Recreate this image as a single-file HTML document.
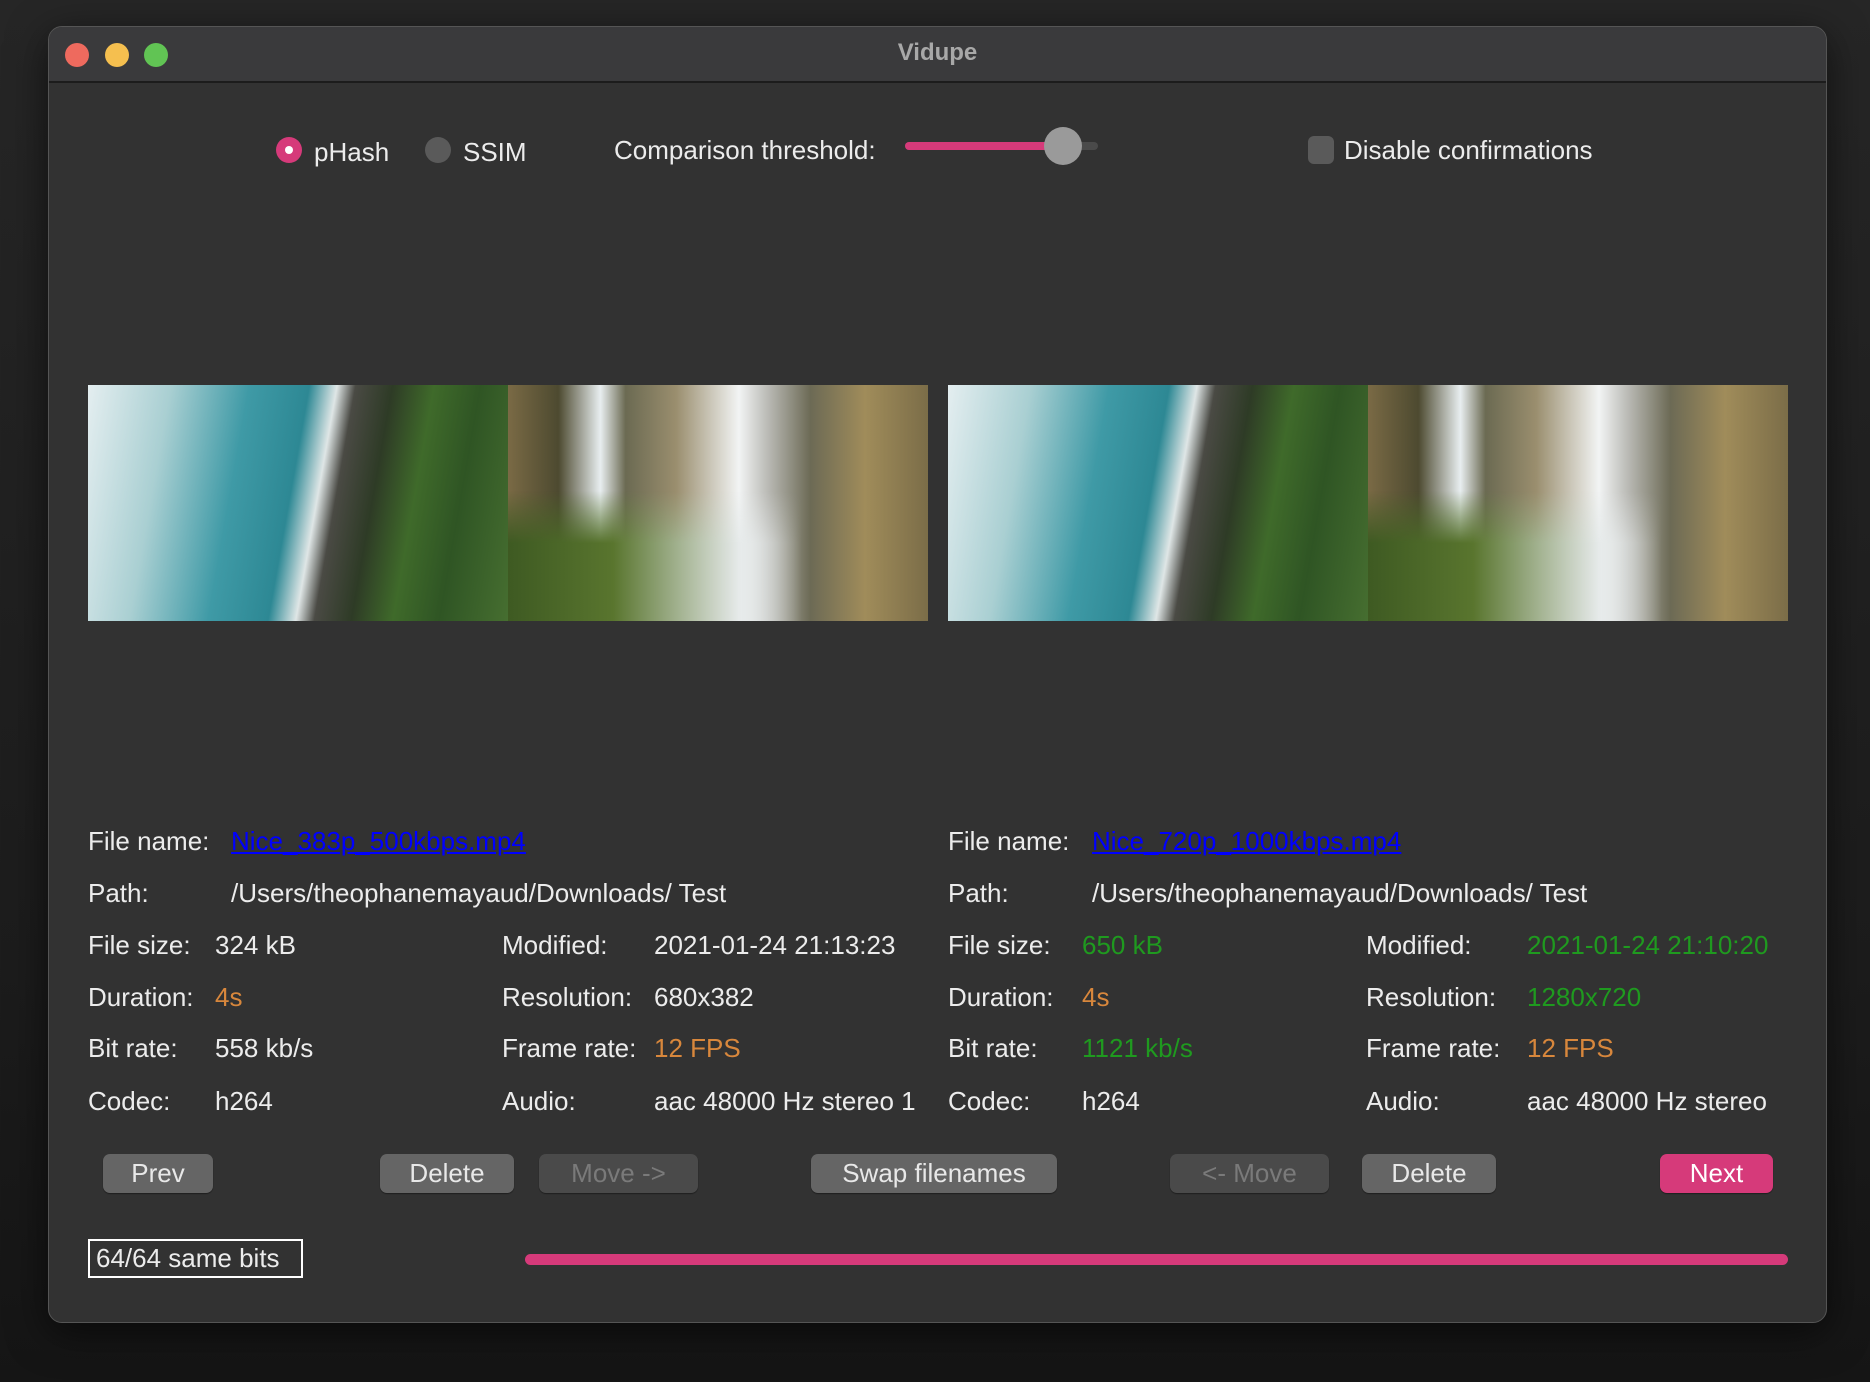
<!DOCTYPE html>
<html><head><meta charset="utf-8"><style>
*{margin:0;padding:0;box-sizing:border-box}
body{width:1870px;height:1382px;background:linear-gradient(#262626,#1c1c1c 70%,#151515);position:relative;overflow:hidden;font-family:"Liberation Sans",sans-serif;color:#ececec}
.win{position:absolute;left:48px;top:26px;width:1779px;height:1297px;background:#323232;border-radius:14px;border:1px solid #555;overflow:hidden;box-shadow:0 10px 40px rgba(0,0,0,.6)}
.tb{position:absolute;left:0;top:0;right:0;height:56px;background:#3a3a3c;border-bottom:2px solid #1c1c1c}
.tl{position:absolute;top:16px;width:24px;height:24px;border-radius:50%}
.title{position:absolute;left:0;right:0;top:12px;text-align:center;font-size:24px;font-weight:bold;color:#a8a8a8}
.a{position:absolute;white-space:nowrap;font-size:26px;line-height:30px}
.img{position:absolute;top:385px;height:236px;width:420px;overflow:hidden}
.coast{background:linear-gradient(100deg,#e4eef0 0%,#a9cfd2 18%,#3f9aa6 35%,#2d8894 48%,#dfe6e6 54%,#4a4a44 58%,#2e3b26 66%,#3f6a2a 75%,#2f5524 85%,#466e30 100%)}
.fall{background:linear-gradient(90deg,#7a6a45 0%,#4d4a30 12%,#e8eef0 22%,#6b6a52 28%,#9a8e6e 40%,#f2f4f4 55%,#b9b9b4 62%,#6c6a55 72%,#a08c5a 85%,#7b6d48 100%)}
.fall::after{content:"";position:absolute;left:0;right:0;bottom:0;height:55%;background:linear-gradient(90deg,#3e5a22,#59752e 25%,#e6eaea 55%,rgba(0,0,0,0) 70%);-webkit-mask:linear-gradient(transparent,#000 40%);mask:linear-gradient(transparent,#000 40%)}
.btn{position:absolute;top:1154px;height:39px;border-radius:7px;background:#656565;color:#e8e8e8;font-size:26px;line-height:39px;text-align:center;box-shadow:0 1px 1px rgba(0,0,0,.4)}
.dis{background:#4a4a4a;color:#7a7a7a}
.g{color:#1f9a1f}.o{color:#d8873c}.l{color:#0000ff;text-decoration:underline}
</style></head><body>
<div class="win">
<div class="tb">
<div class="tl" style="left:16px;background:#ee6a5e"></div>
<div class="tl" style="left:56px;background:#f5bf4f"></div>
<div class="tl" style="left:95px;background:#61c454"></div>
<div class="title">Vidupe</div>
</div>
</div>
<div style="position:absolute;left:276px;top:137px;width:26px;height:26px;border-radius:50%;background:#d63a7a"><div style="position:absolute;left:9px;top:9px;width:8px;height:8px;border-radius:50%;background:#fff"></div></div>
<div class="a" style="left:314px;top:137px">pHash</div>
<div style="position:absolute;left:425px;top:137px;width:26px;height:26px;border-radius:50%;background:#5a5a5a"></div>
<div class="a" style="left:463px;top:137px">SSIM</div>
<div class="a" style="left:614px;top:135px">Comparison threshold:</div>
<div style="position:absolute;left:905px;top:142px;width:193px;height:8px;border-radius:4px;background:#4a4a4a"></div>
<div style="position:absolute;left:905px;top:142px;width:160px;height:8px;border-radius:4px;background:#d63a7a"></div>
<div style="position:absolute;left:1044px;top:127px;width:38px;height:38px;border-radius:50%;background:#9a9a9a"></div>
<div style="position:absolute;left:1308px;top:136px;width:26px;height:28px;border-radius:6px;background:#5a5a5a"></div>
<div class="a" style="left:1344px;top:135px">Disable confirmations</div>
<div class="img coast" style="left:88px"></div>
<div class="img fall" style="left:508px"></div>
<div class="img coast" style="left:948px"></div>
<div class="img fall" style="left:1368px"></div>
<div class="a" style="left:88px;top:826px">File name:</div><div class="a l" style="left:231px;top:826px">Nice_383p_500kbps.mp4</div>
<div class="a" style="left:88px;top:878px">Path:</div><div class="a" style="left:231px;top:878px">/Users/theophanemayaud/Downloads/ Test</div>
<div class="a" style="left:88px;top:930px">File size:</div><div class="a" style="left:215px;top:930px">324 kB</div>
<div class="a" style="left:502px;top:930px">Modified:</div><div class="a" style="left:654px;top:930px">2021-01-24 21:13:23</div>
<div class="a" style="left:88px;top:982px">Duration:</div><div class="a o" style="left:215px;top:982px">4s</div>
<div class="a" style="left:502px;top:982px">Resolution:</div><div class="a" style="left:654px;top:982px">680x382</div>
<div class="a" style="left:88px;top:1033px">Bit rate:</div><div class="a" style="left:215px;top:1033px">558 kb/s</div>
<div class="a" style="left:502px;top:1033px">Frame rate:</div><div class="a o" style="left:654px;top:1033px">12 FPS</div>
<div class="a" style="left:88px;top:1086px">Codec:</div><div class="a" style="left:215px;top:1086px">h264</div>
<div class="a" style="left:502px;top:1086px">Audio:</div><div class="a" style="left:654px;top:1086px">aac 48000 Hz stereo 1</div>
<div class="a" style="left:948px;top:826px">File name:</div><div class="a l" style="left:1092px;top:826px">Nice_720p_1000kbps.mp4</div>
<div class="a" style="left:948px;top:878px">Path:</div><div class="a" style="left:1092px;top:878px">/Users/theophanemayaud/Downloads/ Test</div>
<div class="a" style="left:948px;top:930px">File size:</div><div class="a g" style="left:1082px;top:930px">650 kB</div>
<div class="a" style="left:1366px;top:930px">Modified:</div><div class="a g" style="left:1527px;top:930px">2021-01-24 21:10:20</div>
<div class="a" style="left:948px;top:982px">Duration:</div><div class="a o" style="left:1082px;top:982px">4s</div>
<div class="a" style="left:1366px;top:982px">Resolution:</div><div class="a g" style="left:1527px;top:982px">1280x720</div>
<div class="a" style="left:948px;top:1033px">Bit rate:</div><div class="a g" style="left:1082px;top:1033px">1121 kb/s</div>
<div class="a" style="left:1366px;top:1033px">Frame rate:</div><div class="a o" style="left:1527px;top:1033px">12 FPS</div>
<div class="a" style="left:948px;top:1086px">Codec:</div><div class="a" style="left:1082px;top:1086px">h264</div>
<div class="a" style="left:1366px;top:1086px">Audio:</div><div class="a" style="left:1527px;top:1086px">aac 48000 Hz stereo</div>
<div class="btn" style="left:103px;width:110px">Prev</div>
<div class="btn" style="left:380px;width:134px">Delete</div>
<div class="btn dis" style="left:539px;width:159px">Move -&gt;</div>
<div class="btn" style="left:811px;width:246px">Swap filenames</div>
<div class="btn dis" style="left:1170px;width:159px">&lt;- Move</div>
<div class="btn" style="left:1362px;width:134px">Delete</div>
<div class="btn" style="left:1660px;width:113px;background:#d63a7a;color:#fff">Next</div>
<div class="a" style="left:88px;top:1239px;width:215px;height:39px;border:2px solid #fff;line-height:35px;padding-left:6px">64/64 same bits</div>
<div style="position:absolute;left:525px;top:1254px;width:1263px;height:11px;border-radius:6px;background:#d63a7a"></div>
</body></html>
